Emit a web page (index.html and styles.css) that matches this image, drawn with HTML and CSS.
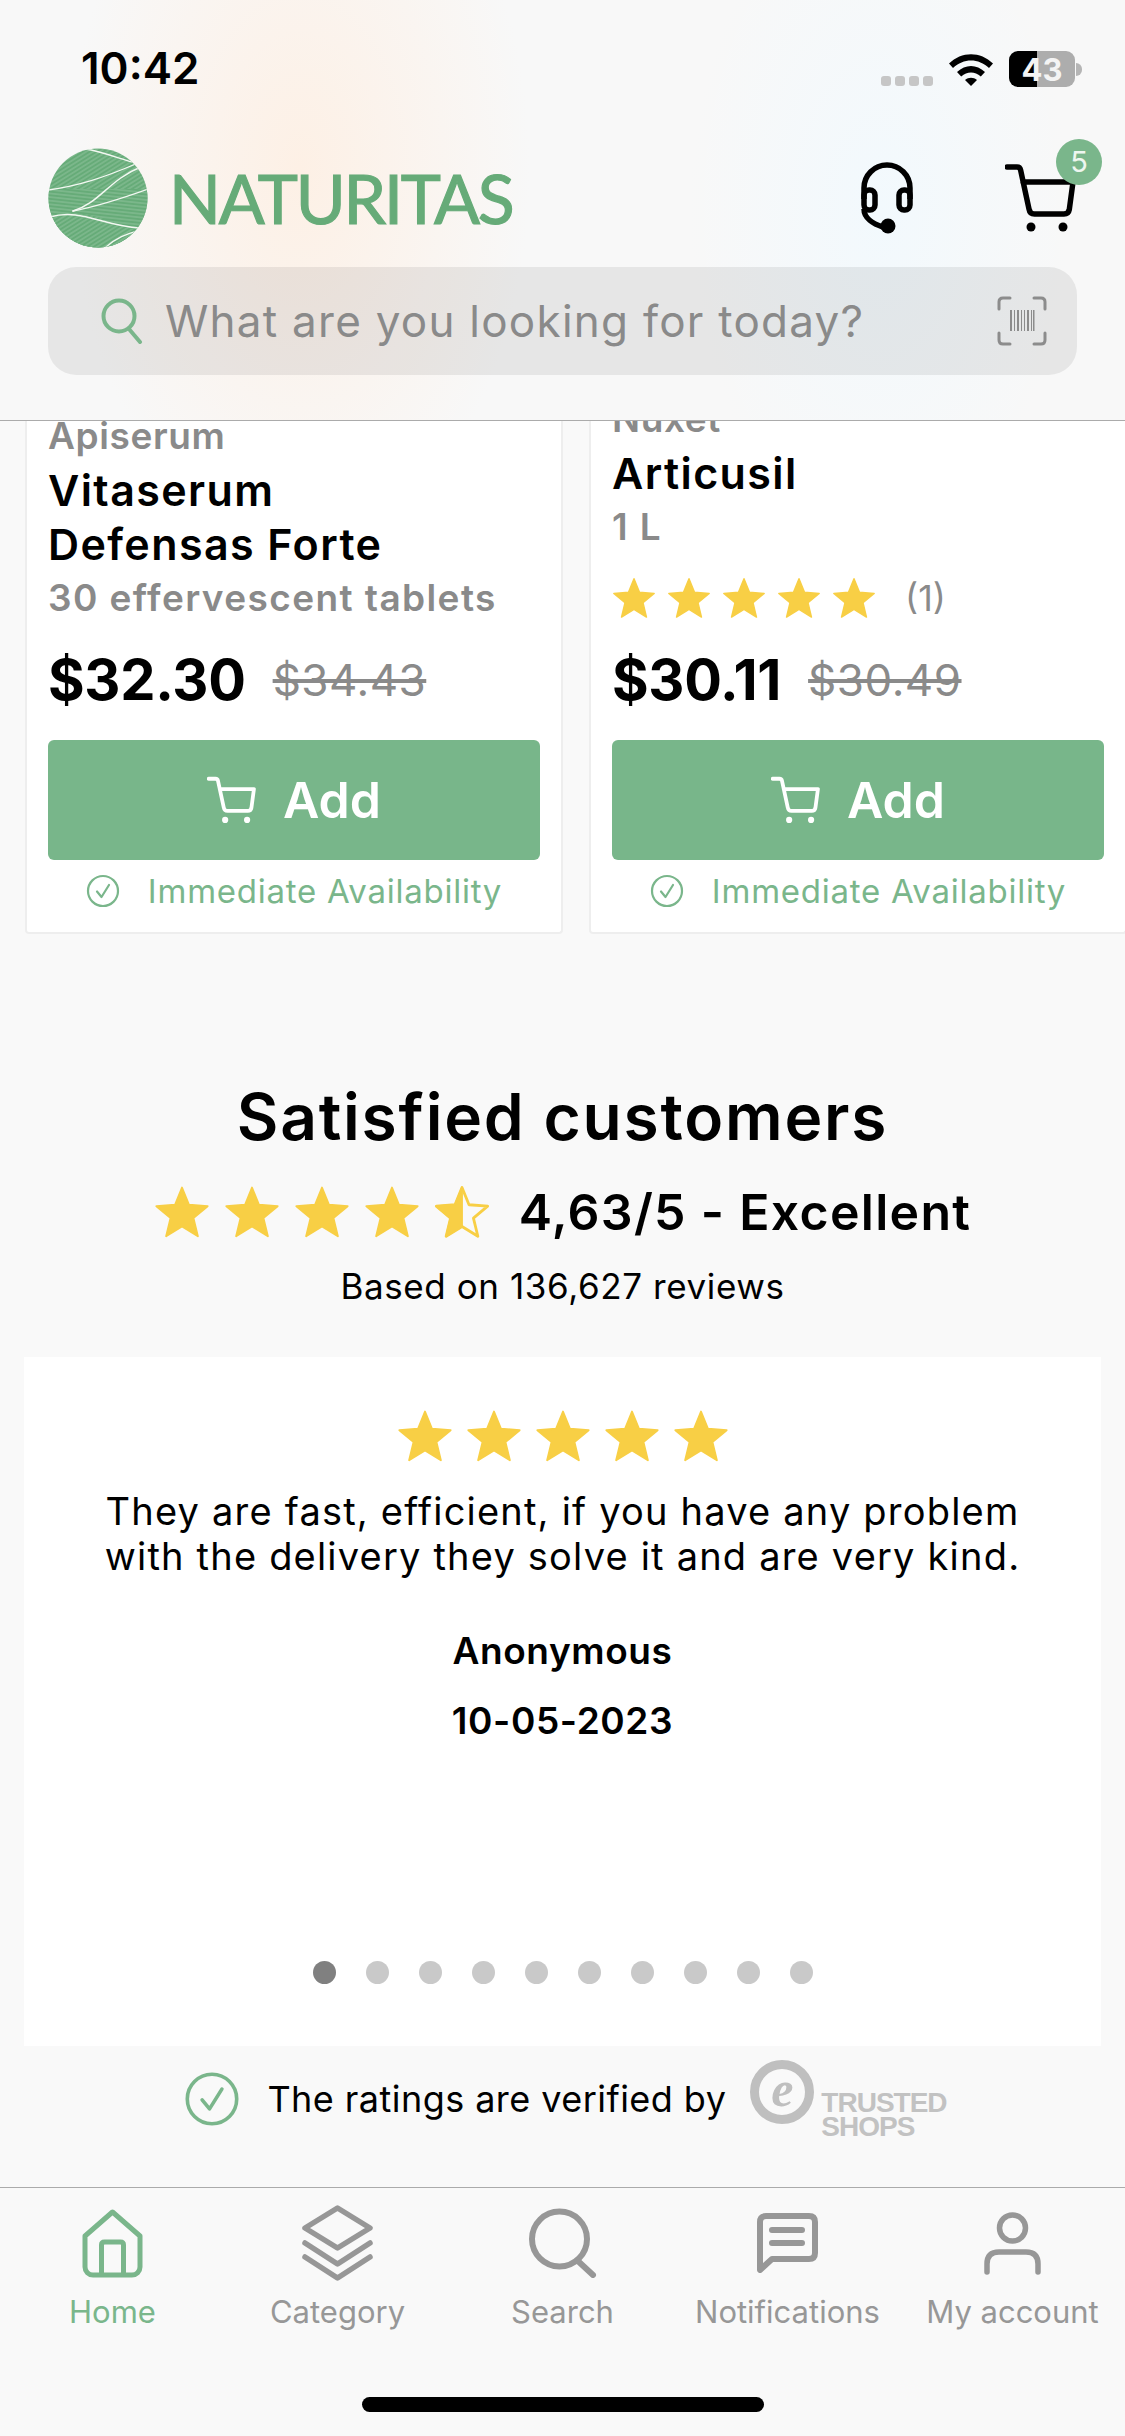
FILE: index.html
```html
<!DOCTYPE html>
<html lang="en">
<head>
  <meta charset="UTF-8">
  <title>Naturitas</title>
  <link rel="stylesheet" href="styles.css">
</head>
<body>

  <!-- shared icons -->
  <svg class="sprite" xmlns="http://www.w3.org/2000/svg">
    <symbol id="star" viewBox="0 0 24 24">
      <path d="M12 1.5l3 7.4 8 .6-6.100 5.100 1.900 7.800-6.800-4.200-6.800 4.200 1.900-7.800L1 9.500l8-.6z" fill="#f8cf45" stroke="#f8cf45" stroke-width=".8" stroke-linejoin="round"/>
    </symbol>
    <symbol id="star-half" viewBox="0 0 24 24">
      <path d="M12 1.500l3 7.400 8 .6-6.100 5.100 1.900 7.800-6.800-4.200-6.800 4.200 1.900-7.800L1 9.500l8-.6z" fill="none" stroke="#f8cf45" stroke-width="1.200" stroke-linejoin="round"/>
      <path d="M12 1.500l-3 7.400-8 .6 6.100 5.100-1.900 7.800 6.800-4.200z" fill="#f8cf45" stroke="#f8cf45" stroke-width=".8" stroke-linejoin="round"/>
    </symbol>
    <symbol id="cart" viewBox="0 0 72 70">
      <path d="M2 4h10q3 0 3.600 3L24 46q.8 5 5.500 5H59q4.500 0 5.300-4.500L68 19H18" fill="none" stroke="currentColor" stroke-width="5.500" stroke-linecap="round" stroke-linejoin="round"/>
      <circle cx="26" cy="64" r="4.500" fill="currentColor"/>
      <circle cx="58" cy="64" r="4.500" fill="currentColor"/>
    </symbol>
    <symbol id="check" viewBox="0 0 34 34">
      <circle cx="17" cy="17" r="15" fill="none" stroke="#7ab68b" stroke-width="2.200"/>
      <path d="M11 17.500l4.500 5.500 7.500-12" fill="none" stroke="#7ab68b" stroke-width="2.200" stroke-linecap="round" stroke-linejoin="round"/>
    </symbol>
    <pattern id="veins-a" width="3.600" height="3.600" patternUnits="userSpaceOnUse" patternTransform="rotate(-32)">
      <rect width="3.600" height="3.600" fill="#66ab78"/>
      <path d="M0 1.800h3.600" stroke="#a9d2b5" stroke-width=".55"/>
    </pattern>
    <pattern id="veins-b" width="3.600" height="3.600" patternUnits="userSpaceOnUse" patternTransform="rotate(6)">
      <rect width="3.600" height="3.600" fill="#66ab78"/>
      <path d="M0 1.800h3.600" stroke="#a9d2b5" stroke-width=".55"/>
    </pattern>
    <clipPath id="logo-clip"><circle cx="50" cy="50" r="49.500"/></clipPath>
  </svg>

  <header class="top">
    <div class="status">
      <span class="time">10:42</span>
      <div class="status-icons">
        <span class="signal"><i></i><i></i><i></i><i></i></span>
        <svg class="wifi" viewBox="0 0 46 33">
          <path d="M1 10.500C13.500-2 32.500-2 45 10.500l-4 4.500C30.500 5 15.500 5 5 15z"/>
          <path d="M9 19c8.500-8 19.500-8 28 0l-4.200 4.500c-6-5.500-13.600-5.500-19.600 0z"/>
          <path d="M17 27c3.500-3 8.500-3 12 0l-6 6z"/>
        </svg>
        <span class="battery"><span class="battery-num">43</span></span>
        <span class="battery-tip"></span>
      </div>
    </div>

    <div class="brand-row">
      <div class="logo">
        <svg class="logo-mark" viewBox="0 0 100 100">
          <g clip-path="url(#logo-clip)">
            <rect width="100" height="100" fill="url(#veins-a)"/>
            <path d="M0 41L100 41V100H0z" fill="url(#veins-b)"/>
            <path d="M0 70Q30 60 58 72T100 82V100H0z" fill="url(#veins-a)"/>
            <g fill="none" stroke="#f3f8f2" stroke-linecap="round">
              <path d="M0 42C30 38 55 30 90 15" stroke-width="1.300"/>
              <path d="M25 63C52 55 60 32 95 18" stroke-width="1.500"/>
              <path d="M25 63C50 58 75 50 100 41" stroke-width="1.300"/>
              <path d="M2 69C32 60 55 78 92 80" stroke-width="1.600"/>
              <path d="M38 1C55 4 70 10 84 14" stroke-width="1.300"/>
              <path d="M58 99C68 90 78 86 92 82" stroke-width="1.300"/>
            </g>
          </g>
        </svg>
        <span class="logo-text">NATURITAS</span>
      </div>
      <div class="top-actions">
        <svg class="headset" viewBox="0 0 52 72">
          <path d="M3 37V26a23 23 0 0 1 46 0v11" fill="none" stroke="#000" stroke-width="5.500"/>
          <rect x="3" y="28" width="11" height="20" rx="5" fill="none" stroke="#000" stroke-width="5.500"/>
          <rect x="38" y="28" width="11" height="20" rx="5" fill="none" stroke="#000" stroke-width="5.500"/>
          <path d="M3 47c0 9 9 15 19 18" fill="none" stroke="#000" stroke-width="5.500"/>
          <circle cx="27" cy="64" r="7.500"/>
        </svg>
        <div class="cart-btn">
          <svg class="cart-icon"><use href="#cart"/></svg>
          <span class="badge">5</span>
        </div>
      </div>
    </div>

    <div class="search">
      <svg class="search-icon" viewBox="0 0 44 46">
        <circle cx="19" cy="18" r="15.500" fill="none" stroke="#7ab68b" stroke-width="4"/>
        <path d="M29 31l11 13" fill="none" stroke="#7ab68b" stroke-width="4" stroke-linecap="round"/>
      </svg>
      <span class="search-text">What are you looking for today?</span>
      <svg class="barcode" viewBox="0 0 50 50">
        <g fill="none" stroke="#8c8c8c" stroke-width="3" stroke-linecap="round" stroke-linejoin="round">
          <path d="M2 13V6q0-4 4-4h7"/>
          <path d="M37 2h7q4 0 4 4v7"/>
          <path d="M2 37v7q0 4 4 4h7"/>
          <path d="M48 37v7q0 4-4 4h-7"/>
        </g>
        <path d="M13 14h2v21h-2zM17 14h1v21h-1zM20 14h2v21h-2zM24 14h1v21h-1zM27 14h1v21h-1zM30 14h2v21h-2zM34 14h1v21h-1zM36 14h1.500v21H36z" fill="#8c8c8c"/>
      </svg>
    </div>
  </header>

  <main class="content">
    <section class="products">
      <article class="card">
        <div class="brand-name">Apiserum</div>
        <div class="prod-name">Vitaserum</div>
        <div class="prod-name">Defensas Forte</div>
        <div class="prod-sub">30 effervescent tablets</div>
        <div class="price-row">
          <span class="price">$32.30</span>
          <span class="old-price">$34.43</span>
        </div>
        <button class="add-btn"><svg class="add-cart"><use href="#cart"/></svg>Add</button>
        <div class="avail"><svg class="avail-check"><use href="#check"/></svg>Immediate Availability</div>
      </article>

      <article class="card">
        <div class="brand-name">Nuxet</div>
        <div class="prod-name">Articusil</div>
        <div class="prod-sub">1 L</div>
        <div class="mini-rating">
          <svg class="mini-star"><use href="#star"/></svg>
          <svg class="mini-star"><use href="#star"/></svg>
          <svg class="mini-star"><use href="#star"/></svg>
          <svg class="mini-star"><use href="#star"/></svg>
          <svg class="mini-star"><use href="#star"/></svg>
          <span class="mini-count">(1)</span>
        </div>
        <div class="price-row">
          <span class="price">$30.11</span>
          <span class="old-price">$30.49</span>
        </div>
        <button class="add-btn"><svg class="add-cart"><use href="#cart"/></svg>Add</button>
        <div class="avail"><svg class="avail-check"><use href="#check"/></svg>Immediate Availability</div>
      </article>
    </section>

    <section class="reviews">
      <h2 class="reviews-title">Satisfied customers</h2>
      <div class="score-row">
        <div class="stars">
          <svg class="star"><use href="#star"/></svg>
          <svg class="star"><use href="#star"/></svg>
          <svg class="star"><use href="#star"/></svg>
          <svg class="star"><use href="#star"/></svg>
          <svg class="star"><use href="#star-half"/></svg>
        </div>
        <span class="score">4,63/5 - Excellent</span>
      </div>
      <div class="based">Based on 136,627 reviews</div>

      <div class="review-card">
        <div class="stars">
          <svg class="star"><use href="#star"/></svg>
          <svg class="star"><use href="#star"/></svg>
          <svg class="star"><use href="#star"/></svg>
          <svg class="star"><use href="#star"/></svg>
          <svg class="star"><use href="#star"/></svg>
        </div>
        <p class="review-text">They are fast, efficient, if you have any problem<br>with the delivery they solve it and are very kind.</p>
        <div class="review-author">Anonymous</div>
        <div class="review-date">10-05-2023</div>
        <div class="dots">
          <i class="active"></i><i></i><i></i><i></i><i></i><i></i><i></i><i></i><i></i><i></i>
        </div>
      </div>

      <div class="verified">
        <svg class="verified-check"><use href="#check"/></svg>
        <span class="verified-text">The ratings are verified by</span>
        <div class="trusted">
          <span class="trusted-e">e</span>
          <span class="trusted-name">TRUSTED<br>SHOPS</span>
        </div>
      </div>
    </section>
  </main>

  <nav class="tabbar">
    <a class="tab tab-active">
      <span class="tab-icon">
        <svg width="61" height="69" viewBox="0 0 61 69" fill="none" stroke="currentColor" stroke-width="5" stroke-linejoin="round">
          <path d="M30.500 3L3 27v31a8 8 0 0 0 8 8h39a8 8 0 0 0 8-8V27z"/>
          <path d="M19.500 66V36q0-3 3-3h16q3 0 3 3v30"/>
        </svg>
      </span>
      Home
    </a>
    <a class="tab">
      <span class="tab-icon">
        <svg width="71" height="76" viewBox="0 0 71 76" fill="none" stroke="currentColor" stroke-width="5.500" stroke-linejoin="round" stroke-linecap="round">
          <path d="M35.500 3L68 23 35.500 43 3 23z"/>
          <path d="M3 38l32.500 21L68 38"/>
          <path d="M3 52l32.500 21L68 52"/>
        </svg>
      </span>
      Category
    </a>
    <a class="tab">
      <span class="tab-icon">
        <svg width="68" height="70" viewBox="0 0 68 70" fill="none" stroke="currentColor" stroke-width="6" stroke-linecap="round">
          <circle cx="30.500" cy="31" r="27.500"/>
          <path d="M50 54l14 13"/>
        </svg>
      </span>
      Search
    </a>
    <a class="tab">
      <span class="tab-icon">
        <svg width="61" height="60" viewBox="0 0 61 60" fill="none" stroke="currentColor" stroke-width="6" stroke-linejoin="round">
          <path d="M3 9q0-6 6-6h43q6 0 6 6v31q0 6-6 6H15L3 57z"/>
          <path d="M15 17h30M15 30h30" stroke-linecap="round"/>
        </svg>
      </span>
      Notifications
    </a>
    <a class="tab">
      <span class="tab-icon">
        <svg width="57" height="63" viewBox="0 0 57 63" fill="none" stroke="currentColor" stroke-width="5.500" stroke-linecap="round">
          <circle cx="28.500" cy="16" r="13"/>
          <path d="M3 60v-8q0-12 12-12h27q12 0 12 12v8"/>
        </svg>
      </span>
      My account
    </a>
  </nav>
  <div class="home-bar-wrap"><div class="home-bar"></div></div>

</body>
</html>
```

FILE: styles.css
```css
* {
  box-sizing: border-box;
}
html, body {
  margin: 0;
  height: 100%;
}
body {
  width: 1125px;
  height: 2436px;
  overflow: hidden;
  display: flex;
  flex-direction: column;
  font-family: Inter, "Open Sans", sans-serif;
  background: #f9f9f9;
  color: #000;
}
.sprite {
  position: absolute;
  width: 0;
  height: 0;
}

/* Header */
.top {
  flex: 0 0 421px;
  padding: 0 48px;
  border-bottom: 1px solid #ababab;
  background:
    radial-gradient(ellipse 230px 380px at 300px 170px, #fdf0e5, rgba(253,240,229,0) 100%),
    radial-gradient(ellipse 190px 330px at 880px 210px, #f2f9fd, rgba(242,249,253,0) 100%),
    #f8f8f8;
}
.status {
  height: 100px;
  padding-top: 46px;
  display: flex;
  justify-content: space-between;
  align-items: flex-start;
}
.time {
  margin-left: 33px;
  font-size: 44px;
  line-height: 44px;
  font-weight: 600;
}
.status-icons {
  display: flex;
  align-items: flex-start;
  margin-right: -5px;
  margin-top: 5px;
}
.signal {
  display: flex;
  gap: 4px;
  margin-top: 25px;
  margin-right: 15px;
}
.signal i {
  width: 10px;
  height: 10px;
  border-radius: 3px;
  background: #c6c6c6;
}
.wifi {
  width: 46px;
  height: 33px;
  margin-top: 2px;
  margin-right: 15px;
}
.battery {
  width: 66px;
  height: 36px;
  border-radius: 9px;
  background: linear-gradient(to right, #000 42%, #adadad 42%);
  display: flex;
  align-items: center;
  justify-content: center;
}
.battery-num {
  color: #f4f4f4;
  font-size: 31px;
  font-weight: 700;
}
.battery-tip {
  width: 6px;
  height: 13px;
  margin-top: 12px;
  margin-left: 1px;
  border-radius: 0 6px 6px 0;
  background: #b5b5b5;
}
.brand-row {
  height: 100px;
  margin-top: 48px;
  display: flex;
  justify-content: space-between;
  align-items: center;
}
.logo {
  display: flex;
  align-items: center;
  gap: 21px;
}
.logo-mark {
  width: 100px;
  height: 100px;
}
.logo-text {
  font-family: Lato, sans-serif;
  font-size: 68px;
  line-height: 68px;
  font-weight: 400;
  letter-spacing: -2.2px;
  -webkit-text-stroke: 1.2px #66ab78;
  color: #66ab78;
}
.top-actions {
  display: flex;
  align-items: center;
  gap: 92px;
}
.headset {
  width: 52px;
  height: 72px;
}
.cart-btn {
  position: relative;
  height: 70px;
}
.cart-icon {
  display: block;
  width: 72px;
  height: 70px;
  color: #000;
}
.badge {
  position: absolute;
  top: -24px;
  right: -25px;
  width: 46px;
  height: 46px;
  border-radius: 50%;
  background: #7ab68b;
  color: #eef6f0;
  font-size: 29px;
  line-height: 46px;
  text-align: center;
}
.search {
  height: 108px;
  margin-top: 19px;
  padding: 0 30px 0 52px;
  border-radius: 28px;
  background: rgba(0,0,0,0.07);
  display: flex;
  align-items: center;
  gap: 21px;
}
.search-icon {
  width: 44px;
  height: 46px;
}
.search-text {
  flex: 1;
  font-size: 44px;
  letter-spacing: 1.25px;
  color: #8a8a8a;
}
.barcode {
  width: 50px;
  height: 50px;
}

/* Content */
.content {
  flex: 1;
  min-height: 0;
  overflow: hidden;
}
.products {
  height: 513px;
  padding-left: 25px;
  display: flex;
  gap: 26px;
}
.card {
  flex: 0 0 538px;
  height: 100%;
  padding: 0 21px;
  background: #fff;
  border: 2px solid #eeeeee;
  border-top: 0;
  border-radius: 0 0 4px 4px;
  display: flex;
  flex-direction: column;
  justify-content: flex-end;
}
.card > * {
  flex: none;
}
.brand-name {
  font-size: 37px;
  line-height: 54px;
  font-weight: 600;
  letter-spacing: 0.6px;
  color: #8a8a8a;
}
.prod-name {
  font-size: 43px;
  line-height: 54px;
  font-weight: 600;
  letter-spacing: 1.4px;
}
.prod-sub {
  font-size: 37px;
  line-height: 54px;
  font-weight: 600;
  letter-spacing: 1.4px;
  color: #8a8a8a;
}
.mini-rating {
  height: 71px;
  padding-top: 16px;
  display: flex;
  align-items: center;
  gap: 11px;
}
.mini-star {
  width: 44px;
  height: 44px;
}
.mini-count {
  margin-left: 18px;
  font-size: 36px;
  color: #8a8a8a;
}
.price-row {
  height: 64px;
  margin-top: 23px;
  display: flex;
  align-items: center;
  gap: 27px;
}
.price {
  font-size: 56px;
  font-weight: 700;
  letter-spacing: -0.3px;
}
.old-price {
  font-size: 44px;
  letter-spacing: 0.5px;
  color: #8a8a8a;
  text-decoration: line-through;
}
.add-btn {
  height: 120px;
  margin-top: 28px;
  border: 0;
  border-radius: 6px;
  background: #78b68a;
  color: #fff;
  font-family: inherit;
  font-size: 50px;
  font-weight: 600;
  display: flex;
  align-items: center;
  justify-content: center;
  gap: 26px;
}
.add-cart {
  width: 50px;
  height: 48px;
}
.avail {
  height: 72px;
  padding-bottom: 10px;
  display: flex;
  align-items: center;
  justify-content: center;
  gap: 28px;
  font-size: 33px;
  letter-spacing: 0.75px;
  color: #7ab68b;
}
.avail-check {
  width: 34px;
  height: 34px;
}

/* Reviews */
.reviews {
  text-align: center;
}
.reviews-title {
  margin: 143px 0 0;
  font-size: 64px;
  line-height: 80px;
  font-weight: 600;
  letter-spacing: 1.8px;
}
.score-row {
  height: 60px;
  margin-top: 25px;
  display: flex;
  align-items: center;
  justify-content: center;
  gap: 29px;
}
.stars {
  display: flex;
  justify-content: center;
  gap: 14px;
}
.star {
  width: 56px;
  height: 56px;
}
.score {
  font-size: 50px;
  font-weight: 600;
  letter-spacing: 1.3px;
}
.based {
  margin-top: 22px;
  font-size: 35px;
  line-height: 44px;
  letter-spacing: 0.6px;
}
.review-card {
  width: 1077px;
  height: 689px;
  margin: 49px 0 0 24px;
  padding: 51px 0 62px;
  background: #fff;
  display: flex;
  flex-direction: column;
}
.review-card .stars {
  gap: 13px;
}
.review-text {
  margin: 25px 0 0;
  font-size: 38px;
  line-height: 45px;
  letter-spacing: 1.2px;
}
.review-author {
  margin-top: 47px;
  font-size: 37px;
  line-height: 50px;
  font-weight: 600;
  letter-spacing: 0.6px;
}
.review-date {
  margin-top: 20px;
  font-size: 37px;
  line-height: 50px;
  font-weight: 600;
  letter-spacing: 0.6px;
}
.dots {
  margin-top: auto;
  display: flex;
  justify-content: center;
  gap: 30px;
}
.dots i {
  width: 23px;
  height: 23px;
  border-radius: 50%;
  background: #c9c9c9;
}
.dots .active {
  background: #808080;
}
.verified {
  margin-top: 14px;
  height: 78px;
  padding-left: 6px;
  display: flex;
  align-items: center;
  justify-content: center;
  gap: 27px;
}
.verified-check {
  width: 56px;
  height: 56px;
}
.verified-text {
  margin-right: -3px;
  font-size: 36px;
  letter-spacing: 0.45px;
}
.trusted {
  display: flex;
  align-items: flex-start;
  gap: 7px;
  height: 78px;
}
.trusted-e {
  width: 64px;
  height: 64px;
  border-radius: 50%;
  background: #f9f9f9;
  border: 9px solid #bfbfbf;
  color: #bfbfbf;
  font-family: "Liberation Serif", serif;
  font-style: italic;
  font-weight: 700;
  font-size: 50px;
  line-height: 40px;
  text-align: center;
}
.trusted-name {
  margin-top: 31px;
  font-family: "Liberation Sans", sans-serif;
  font-size: 28px;
  line-height: 24px;
  font-weight: 700;
  letter-spacing: -1px;
  text-align: left;
  color: #c2c2c2;
}

/* Tab bar */
.tabbar {
  flex: 0 0 210px;
  padding-top: 16px;
  border-top: 1px solid #ababab;
  display: flex;
}
.tab {
  flex: 1;
  display: flex;
  flex-direction: column;
  align-items: center;
  color: #979797;
  font-size: 31px;
  line-height: 40px;
  white-space: nowrap;
}
.tab-active {
  color: #7ab68b;
}
.tab-icon {
  height: 78px;
  margin-bottom: 10px;
  display: flex;
  align-items: center;
  justify-content: center;
}
.home-bar-wrap {
  flex: 0 0 39px;
  display: flex;
  justify-content: center;
}
.home-bar {
  width: 402px;
  height: 15px;
  border-radius: 8px;
  background: #000;
}
```
